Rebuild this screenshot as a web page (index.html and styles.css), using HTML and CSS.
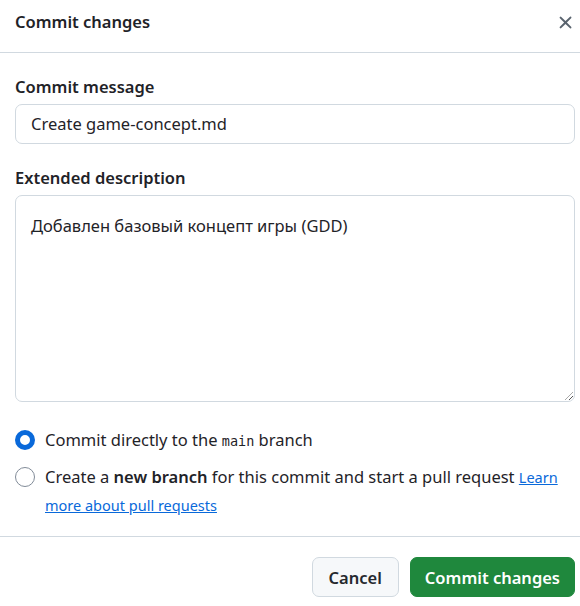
FILE: index.html
```html
<!DOCTYPE html>
<html lang="en">
<head>
<meta charset="utf-8">
<title>Commit changes</title>
<link rel="stylesheet" href="styles.css">
</head>
<body>
<div class="dialog">
  <header class="dialog-header">
    <h1 class="dialog-title">Commit changes</h1>
    <button class="close-btn" aria-label="Close">
      <svg width="21" height="21" viewBox="0 0 16 16"><path d="M3.72 3.72a.75.75 0 0 1 1.06 0L8 6.94l3.22-3.22a.749.749 0 0 1 1.275.326.749.749 0 0 1-.215.734L9.06 8l3.22 3.22a.749.749 0 0 1-.326 1.275.749.749 0 0 1-.734-.215L8 9.06l-3.22 3.22a.751.751 0 0 1-1.042-.018.751.751 0 0 1-.018-1.042L6.94 8 3.72 4.78a.75.75 0 0 1 0-1.06Z" fill="currentColor"/></svg>
    </button>
  </header>
  <div class="dialog-body">
    <div class="field">
      <label class="field-label">Commit message</label>
      <div class="text-input">Create game-concept.md</div>
    </div>
    <div class="field">
      <label class="field-label">Extended description</label>
      <div class="textarea">Добавлен базовый концепт игры (GDD)<span class="resize"></span></div>
    </div>
    <div class="radios">
      <div class="radio-row">
        <span class="radio checked"></span>
        <p class="radio-label">Commit directly to the <code>main</code> branch</p>
      </div>
      <div class="radio-row">
        <span class="radio"></span>
        <p class="radio-label">Create a <strong>new branch</strong> for this commit and start a pull request <a href="#">Learn</a> <a href="#">more about pull requests</a></p>
      </div>
    </div>
  </div>
  <footer class="dialog-footer">
    <button class="btn btn-default">Cancel</button>
    <button class="btn btn-primary">Commit changes</button>
  </footer>
</div>
</body>
</html>
```
FILE: styles.css
```css
* { box-sizing: border-box; }
html, body { margin: 0; padding: 0; background: #fff; }
body {
  font-family: "Noto Sans", "Segoe UI", sans-serif;
  font-size: 16.5px;
  color: #1f2328;
}
.dialog { width: 580px; height: 606px; display: flex; flex-direction: column; }
.dialog-header {
  height: 53px;
  display: flex;
  align-items: flex-start;
  justify-content: space-between;
  padding: 10px 4px 0 15px;
  border-bottom: 1px solid #d1d9e0;
}
.dialog-title { margin: 0; font-size: 16.5px; font-weight: 600; line-height: 24px; }
.close-btn {
  border: 0; background: none; padding: 0;
  width: 22px; height: 24px;
  display: flex; align-items: center; justify-content: center;
  color: #59636e;
}
.dialog-body { padding: 22px 5px 0 15px; display: flex; flex-direction: column; }
.field { display: flex; flex-direction: column; margin-bottom: 22px; }
.field + .field { margin-bottom: 16px; }
.field-label { font-weight: 600; line-height: 24px; margin-bottom: 5px; }
.text-input {
  height: 40px;
  border: 1px solid #d1d9e0;
  border-radius: 7px;
  padding: 0 15px;
  display: flex; align-items: center;
  line-height: 24px;
}
.textarea {
  position: relative;
  height: 207px;
  border: 1px solid #d1d9e0;
  border-radius: 7px;
  padding: 18px 15px;
  line-height: 24px;
}
.resize {
  position: absolute; right: 1px; bottom: 1px;
  width: 8px; height: 8px;
  background: repeating-linear-gradient(135deg, transparent 0 2px, #555 2px 3px);
  clip-path: polygon(100% 0, 100% 100%, 0 100%);
}
.radios { display: flex; flex-direction: column; gap: 8px; margin-top: 8px; }
.radio-row { display: flex; align-items: flex-start; gap: 10px; line-height: 24px; }
.radio {
  flex: none;
  width: 20px; height: 20px;
  margin-top: 4px;
  border-radius: 50%;
  border: 1px solid #818b98;
  background: #fff;
}
.radio.checked { border: 5px solid #0969da; }
.radio-label { margin: 0; line-height: 28px; }
.radio-label code { font-family: "DejaVu Sans Mono", monospace; font-size: 13.5px; }
.radio-label strong { font-weight: 600; }
.radio-label a { color: #0969da; font-size: 14.5px; }
.dialog-footer {
  margin-top: auto;
  height: 70px;
  border-top: 1px solid #d1d9e0;
  display: flex;
  justify-content: flex-end;
  align-items: flex-start;
  gap: 11px;
  padding: 20px 5px 0 0;
}
.btn {
  height: 40px;
  border-radius: 7px;
  font-family: inherit;
  font-size: 16.5px;
  font-weight: 600;
  padding: 0 15px;
}
.btn-default { background: #f6f8fa; border: 1px solid #d1d9e0; color: #25292e; padding: 0 16px; }
.btn-primary { background: #1f883d; border: 1px solid #1f883d; color: #fff; padding: 0 14px; }
```
